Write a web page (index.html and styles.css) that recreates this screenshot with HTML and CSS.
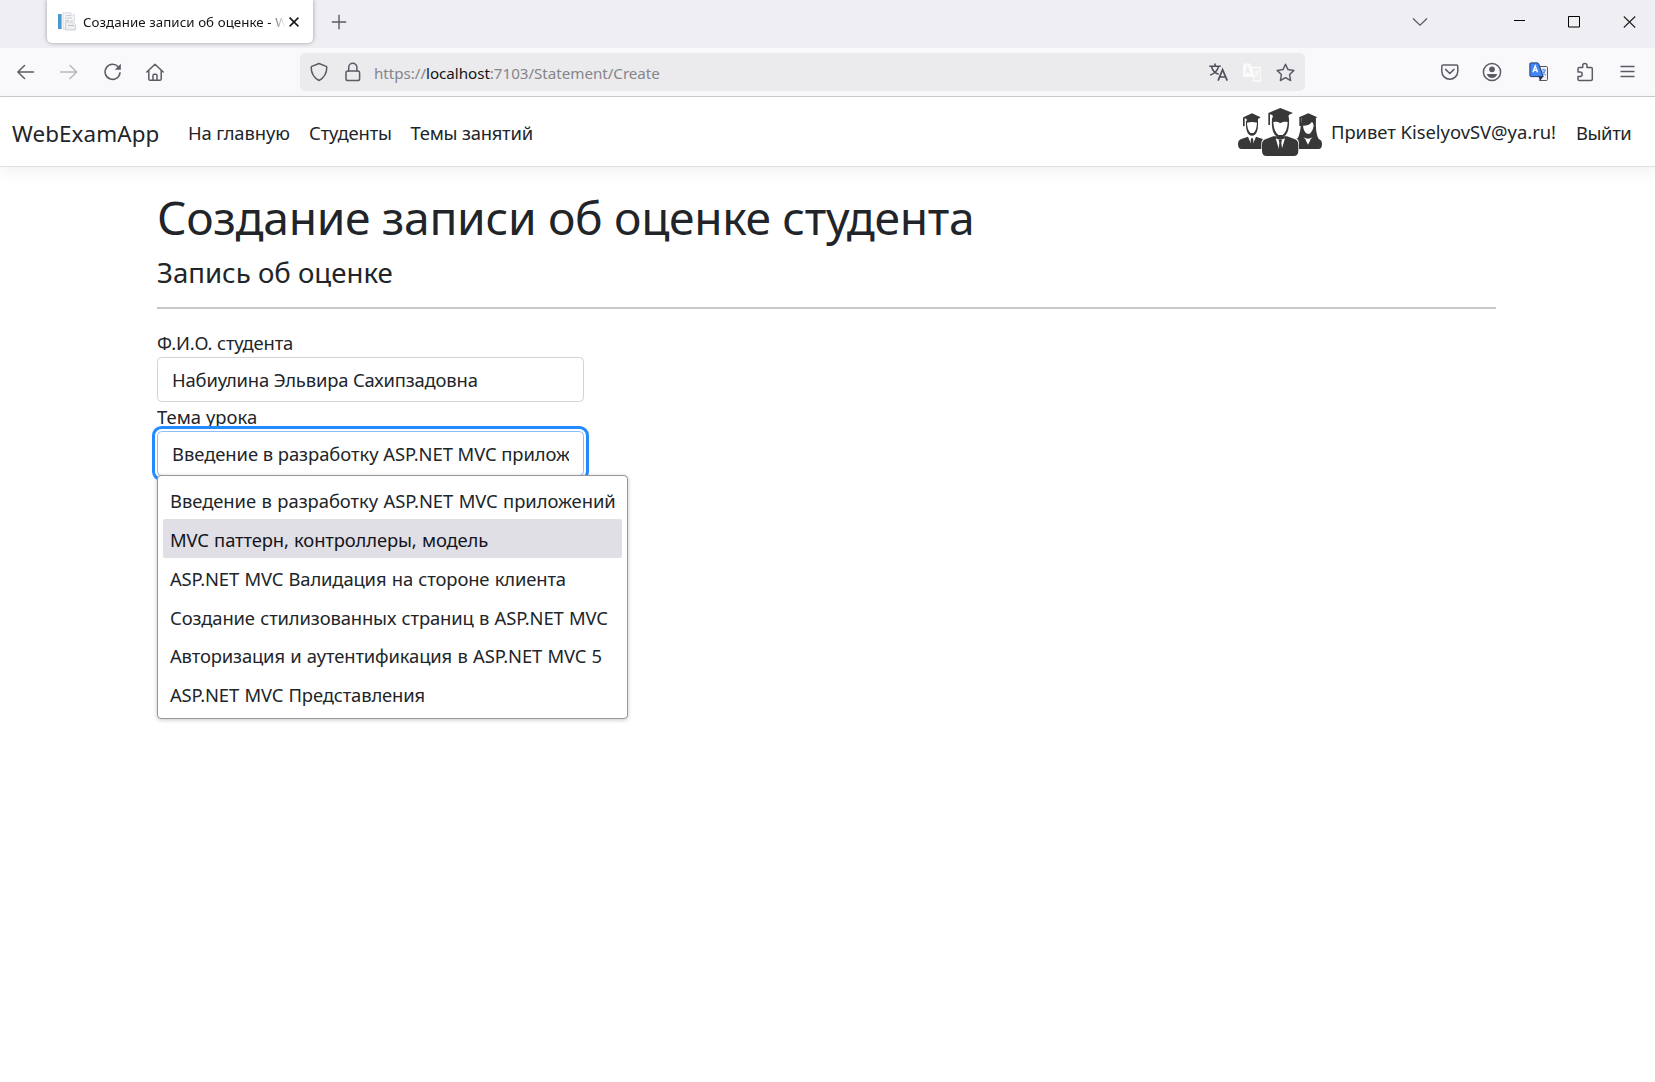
FILE: index.html
```
<!DOCTYPE html>
<html lang="ru">
<head>
<meta charset="utf-8">
<title>Создание записи об оценке - WebExamApp</title>
<link rel="stylesheet" href="styles.css">
</head>
<body>
<header class="tabstrip">
  <div class="tab">
    <svg class="favicon" width="20" height="20" viewBox="0 0 20 20"><rect x="1" y="2" width="3.6" height="15" fill="#4a98cf"/><path d="M6 .8h8v2h3.500v6h-3V17H6z" fill="#f4f5f7" stroke="#d3d6da" stroke-width=".8"/><path d="M9 3.500h5M8 6h7M8 8.500h4" stroke="#c3c8ce" stroke-width=".9"/><path d="M8.500 10h7.500l2.500 2.500V18H8.500z" fill="#eceef0" stroke="#c4c8cd" stroke-width=".8"/><path d="M11 13.500h6" stroke="#bfc4c9"/></svg>
    <span class="tab-title">Создание записи об оценке - WebExamApp</span>
    <svg class="tab-close" width="10" height="10" viewBox="0 0 10 10"><path d="M.6.6l8.800 8.800M9.400.6L.6 9.400" stroke="#15141a" stroke-width="1.500"/></svg>
  </div>
  <svg class="new-tab" width="16" height="16" viewBox="0 0 16 16"><path d="M8 .8v14.400M.8 8h14.400" stroke="#5b5b66" stroke-width="1.400"/></svg>
  <div class="window-buttons">
    <svg width="16" height="10" viewBox="0 0 16 10"><path d="M1 1.500l7 6.700 7-6.700" fill="none" stroke="#5b5b66" stroke-width="1.300"/></svg>
    <svg class="minimize" width="12" height="12" viewBox="0 0 12 12"><path d="M0 5.500h11" stroke="#000"/></svg>
    <svg class="maximize" width="12" height="12" viewBox="0 0 12 12"><path d="M.5.500h11v10.500H.5z" fill="none" stroke="#000"/></svg>
    <svg class="close" width="13" height="12" viewBox="0 0 13 12"><path d="M.8.500l11.400 11M12.200.5L.8 11.500" stroke="#222" stroke-width="1.100"/></svg>
  </div>
</header>
<div class="toolbar">
  <div class="nav-buttons">
    <svg width="18" height="18" viewBox="0 0 18 18"><path d="M16.500 9H1M7.500 2.500L.9 9l6.600 6.500" class="line"/></svg>
    <svg class="disabled" width="18" height="18" viewBox="0 0 18 18"><path d="M.7 9h15.800M10 2.500L16.700 9 10 15.500" class="line"/></svg>
    <svg width="18" height="18" viewBox="0 0 18 18"><path d="M17 9.800A7.500 7.500 0 1 1 15.300 4" class="line"/><path d="M17.800.8v6h-6z" fill="#5b5b66"/></svg>
    <svg width="18" height="18" viewBox="0 0 18 18"><path d="M.8 9L9 1.300 17.200 9M2.800 7.500v8.400q0 1.300 1.300 1.300h9.800q1.300 0 1.300-1.300V7.500M7 17v-4.500q0-1.300 1.300-1.300h1.400q1.300 0 1.300 1.300V17" class="line"/></svg>
  </div>
  <div class="urlbar">
    <svg width="18" height="20" viewBox="0 0 18 20"><path d="M9 1.500l7.200 2.900c.4.200.6.500.6.900 0 6.200-2.300 10.300-7.800 13.200C3.500 15.600 1.200 11.500 1.200 5.300c0-.4.2-.7.6-.9z" class="line"/></svg>
    <svg class="lock" width="16" height="20" viewBox="0 0 16 20"><rect x="1" y="9" width="13.600" height="9.600" rx="1.800" class="line"/><path d="M3.700 9V5.400a4.100 4.100 0 0 1 8.200 0V9" class="line"/></svg>
    <div class="url"><span class="scheme">https://</span><span class="host">localhost</span><span class="path">:7103/Statement/Create</span></div>
    <svg class="translate" width="19" height="18" viewBox="0 0 19 18"><path d="M.3 3.200h11.500M6 .4v2.800M2.600 3.600c.8 3.600 3.400 6.500 7 7.700M9.500 3.600C8.500 7.300 5.500 10.600 1.200 12.100" fill="none" stroke="#4f4f59" stroke-width="1.600"/><path d="M9.100 17.600l4.500-11 4.600 11M10.700 14h5.900" fill="none" stroke="#4f4f59" stroke-width="1.700"/></svg>
    <svg class="page-translate" width="19" height="19" viewBox="0 0 19 19"><path d="M1 .5h7.500L13 14H1z" fill="#fafafb"/><path d="M9.500 4.500h9v13.500H11l1.500-4z" fill="#ededee" stroke="#fafafb" stroke-width="1.300"/><path d="M3.500 10.500L5.500 4l2 6.500M4.200 8.600h2.600" fill="none" stroke="#ebebed" stroke-width="1.200"/><path d="M12.500 8h4.500M16 8q-.8 3.700-3 5M13.500 9.500l3 3.500" fill="none" stroke="#fafafb" stroke-width="1.200"/></svg>
    <svg class="star" width="19" height="19" viewBox="0 0 19 19"><path d="M9.500 1.200l2.500 5.400 5.900.8-4.300 4.100 1 6-5.100-2.900-5.100 2.900 1-6L1.100 7.400 7 6.600z" class="line"/></svg>
  </div>
  <div class="extensions">
    <svg width="18" height="17" viewBox="0 0 18 17"><path d="M2.200 1h13.200q1.400 0 1.400 1.400v4.800a8 8 0 0 1-16 0V2.400Q.8 1 2.200 1z" class="line"/><path d="M4.600 5.400l4.200 4.100L13 5.400" class="line"/></svg>
    <svg class="account" width="20" height="20" viewBox="0 0 20 20"><circle cx="10" cy="10" r="8.600" class="line"/><circle cx="10" cy="7.300" r="2.900" fill="#5b5b66"/><path d="M4.800 12h10.400q-1.200 4-5.200 4t-5.200-4z" fill="#5b5b66"/></svg>
    <svg class="translate-ext" width="20" height="20" viewBox="0 0 20 20"><path d="M9 4.500h8.500q1 0 1 1v12q0 1-1 1h-7l2-4z" fill="#f0f0f0" stroke="#55555c"/><path d="M12.500 8h4.500M16.200 8q-.6 3.500-3 5.200M13.500 9.500l3.200 3.700M14.700 6.800V8" fill="none" stroke="#5b94ec" stroke-width="1.200"/><path d="M9.500 14.500h4.800l-3.200 4z" fill="#1e2f58"/><path d="M1.500.9h7.200l.9.700 4.600 13H1.700l-.8-.8V1.500z" fill="#4385f5" stroke="#223a70"/><path d="M3.900 10.300L6.200 4l2.300 6.300M4.600 8.400h3.200" fill="none" stroke="#fff" stroke-width="1.400"/></svg>
    <svg class="puzzle" width="18" height="20" viewBox="0 0 18 20"><path d="M2 8.500V6.800q0-1.300 1.300-1.300h3.400V3.600a2 2 0 0 1 4.300 0v1.900h4q1.300 0 1.300 1.300v10.400q0 1.300-1.300 1.300H3.300Q2 18.500 2 17.200v-2.700h2a2.200 2.200 0 0 0 0-4.400H2z" class="line"/></svg>
    <svg class="menu" width="15" height="14" viewBox="0 0 15 14"><path d="M.5 1.500h14M.5 6.500h14M.5 11.500h14" stroke="#5b5b66" stroke-width="1.500"/></svg>
  </div>
</div>
<nav class="navbar">
  <a class="brand">WebExamApp</a>
  <a class="link home">На главную</a>
  <a class="link students">Студенты</a>
  <a class="link topics">Темы занятий</a>
  <svg class="graduates" width="84" height="48" viewBox="12 12 252 144">
    <g fill="#383838">
      <path d="M12 120q0-12 10-15l20-7 12 28 12-28 22 8v29H22q-10 0-10-15z"/>
      <path d="M264 120q0-12-10-15l-20-7-12 24-12-24-24 6v31h68q10 0 10-15z"/>
      <path d="M36 51q-2 44 18 44t18-44z"/>
      <path d="M28 40l26-12 26 12-8 5v11q-18-8-34 0v-11l-6-2v24h-5V42z"/>
      <path d="M202 43q-1 46-13 64h66q-12-18-9-64z"/>
    </g>
    <path d="M39 56q14-4 30 0-1 22-10 31h-10q-9-9-10-31z" fill="#fff"/>
    <path d="M44 99l10 4 10-4-10 26z" fill="#fff"/><path d="M51 103h6l2 20-5 8-5-8z" fill="#383838"/>
    <path d="M207 65q20 0 27-12 5 5 5 13-2 15-11 23h-9q-10-6-12-24z" fill="#fff"/>
    <path d="M208 100q14 8 28 0l-14 13z" fill="#fff"/>
    <path d="M195 40l28-12 27 12-9 5v11q-18-8-35 0v-11l-5-2v23h-5V42z" fill="#383838"/>
    <path d="M82 139v-20q0-13 12-17l23-6h44l23 6q11 4 11 17v20z" fill="#fff"/>
    <path d="M84 140v-19q0-12 12-16l22-8h41l22 8q12 4 12 16v19q0 16-14 16H98q-14 0-14-16z" fill="#383838"/>
    <path d="M114 42q-4 58 25 58t26-58z" fill="#383838"/>
    <path d="M118 54l13-2 8 4 8-4 14 2q-1 28-15 39h-13q-14-11-15-39z" fill="#fff"/>
    <path d="M125 103q14 8 28 0l-14 47z" fill="#fff"/><path d="M134 107h10l-2 9 3 25-6 12-6-12 3-25z" fill="#383838"/>
    <path d="M103 27l36-15 38 15-13 6v18q-13 0-25 6-12-6-23-6V34l-8-3v32h-5V29z" fill="#383838"/>
  </svg>
  <span class="link greeting">Привет KiselyovSV@ya.ru!</span>
  <a class="link logout">Выйти</a>
</nav>
<main class="container">
  <h1>Создание записи об оценке студента</h1>
  <h4>Запись об оценке</h4>
  <hr>
  <form class="form">
    <label class="label-student">Ф.И.О. студента</label>
    <div class="select student"><span>Набиулина Эльвира Сахипзадовна</span></div>
    <label class="label-topic">Тема урока</label>
    <div class="select focused"><span>Введение в разработку ASP.NET MVC приложений</span></div>
    <ul class="options">
      <li class="intro">Введение в разработку ASP.NET MVC приложений</li>
      <li class="active">MVC паттерн, контроллеры, модель</li>
      <li>ASP.NET MVC Валидация на стороне клиента</li>
      <li>Создание стилизованных страниц в ASP.NET MVC</li>
      <li>Авторизация и аутентификация в ASP.NET MVC 5</li>
      <li>ASP.NET MVC Представления</li>
    </ul>
  </form>
</main>
</body>
</html>
```
FILE: styles.css
```
* { box-sizing: border-box; }
body {
  margin: 0;
  min-height: 1082px;
  background: #fff;
  color: #212529;
  font: 18.4px/28px "Noto Sans", "Open Sans", sans-serif;
  overflow: hidden;
}
svg { display: block; flex: none; }
.line { fill: none; stroke: #5b5b66; stroke-width: 1.5; stroke-linecap: round; stroke-linejoin: round; }

.tabstrip { display: flex; height: 48px; background: #efeef3; padding-left: 47px; }
.tab {
  display: flex;
  align-items: center;
  width: 266px;
  height: 43px;
  padding: 0 14px 0 10px;
  background: #fff;
  border-radius: 0 0 5px 5px;
  box-shadow: 0 0 4px rgba(0, 0, 0, .36);
}
.tab-title {
  width: 202px;
  margin-left: 6px;
  overflow: hidden;
  white-space: nowrap;
  color: #15141a;
  font-size: 13.3px;
  letter-spacing: .07px;
  line-height: 42px;
  -webkit-mask-image: linear-gradient(to right, #000 186px, transparent 202px);
  mask-image: linear-gradient(to right, #000 186px, transparent 202px);
}
.tab-close { margin-left: 4px; }
.new-tab { margin: 14px 0 0 18px; }
.window-buttons { display: flex; align-items: center; height: 43px; margin-left: auto; padding-right: 19px; }
.minimize { margin: -1px 0 0 86px; }
.maximize { margin-left: 42px; }
.close { margin-left: 43px; }

.toolbar { display: flex; align-items: center; height: 49px; background: #f9f9fb; border-bottom: 1px solid #c9c9ce; padding-left: 17px; }
.nav-buttons { display: flex; gap: 25px; width: 283px; }
.disabled { opacity: .42; }
.urlbar { display: flex; align-items: center; width: 1005px; height: 38px; padding: 0 10px; background: #ebebed; border-radius: 5px; }
.lock { margin-left: 17px; }
.url { flex: 1; margin-left: 13px; padding-top: 2px; color: #85858a; font-size: 15.2px; white-space: nowrap; }
.host { color: #15141a; }
.scheme, .host, .path { letter-spacing: -.04px; }
.page-translate { margin-left: 14px; }
.star { margin-left: 15px; }
.extensions { display: flex; align-items: center; margin-left: 136px; }
.account { margin-left: 23px; }
.translate-ext { margin-left: 27px; }
.puzzle { margin-left: 27px; }
.menu { margin-left: 26px; }

.navbar {
  display: flex;
  align-items: center;
  height: 70px;
  padding: 0 23px 0 12px;
  border-bottom: 1px solid #dee2e6;
  box-shadow: 0 5px 14px rgba(0, 0, 0, .06);
  white-space: nowrap;
}
.brand { width: 176px; padding-top: 5px; font-size: 22.4px; letter-spacing: .1px; }
.link { padding-top: 3px; }
.home { width: 121px; letter-spacing: -.12px; }
.students { width: 101.5px; letter-spacing: -.12px; }
.topics { letter-spacing: -.22px; }
.graduates { margin: 1px 9px 0 auto; }
.greeting { width: 245px; padding-top: 1px; letter-spacing: -.02px; }
.logout { width: 56px; letter-spacing: -.4px; }

.container { padding: 23px 159px 0 157px; }
h1 { margin: 0; font-weight: 400; font-size: 46.2px; line-height: 56px; letter-spacing: -.32px; white-space: nowrap; }
h4 { margin: 9px 0 0; font-weight: 400; font-size: 27.6px; line-height: 34px; letter-spacing: 0; }
hr { margin: 18px 0 20px; height: 2px; border: 0; background: #c7c8c9; }
.form { position: relative; width: 427px; }
label { display: block; }
.label-student { letter-spacing: -.15px; }
.label-topic { height: 29px; padding-top: 1px; letter-spacing: .03px; }
.select { height: 45px; padding: 0 14px; border: 1px solid #ced4da; border-radius: 4.5px; line-height: 43px; }
.select span { display: block; overflow: hidden; white-space: nowrap; }
.student { letter-spacing: -.16px; }
.focused { border-color: #8fbdf8; outline: 3px solid #218bff; outline-offset: 2px; letter-spacing: -.05px; }
.options {
  position: absolute;
  top: 146px;
  left: 0;
  width: 471px;
  height: 244px;
  margin: 0;
  padding: 4.2px 5px;
  list-style: none;
  background: #fff;
  border: 1px solid #96969b;
  border-radius: 4px;
  box-shadow: 0 1px 4px rgba(0, 0, 0, .22);
}
.options li { height: 38.8px; padding: 3px 0 0 7px; line-height: 36px; letter-spacing: -.13px; word-spacing: .7px; white-space: nowrap; border-radius: 2px; }
.options .intro { letter-spacing: -.04px; }
.options .active { padding-top: 3.5px; background: #e0dfe6; color: #15141a; }
```
